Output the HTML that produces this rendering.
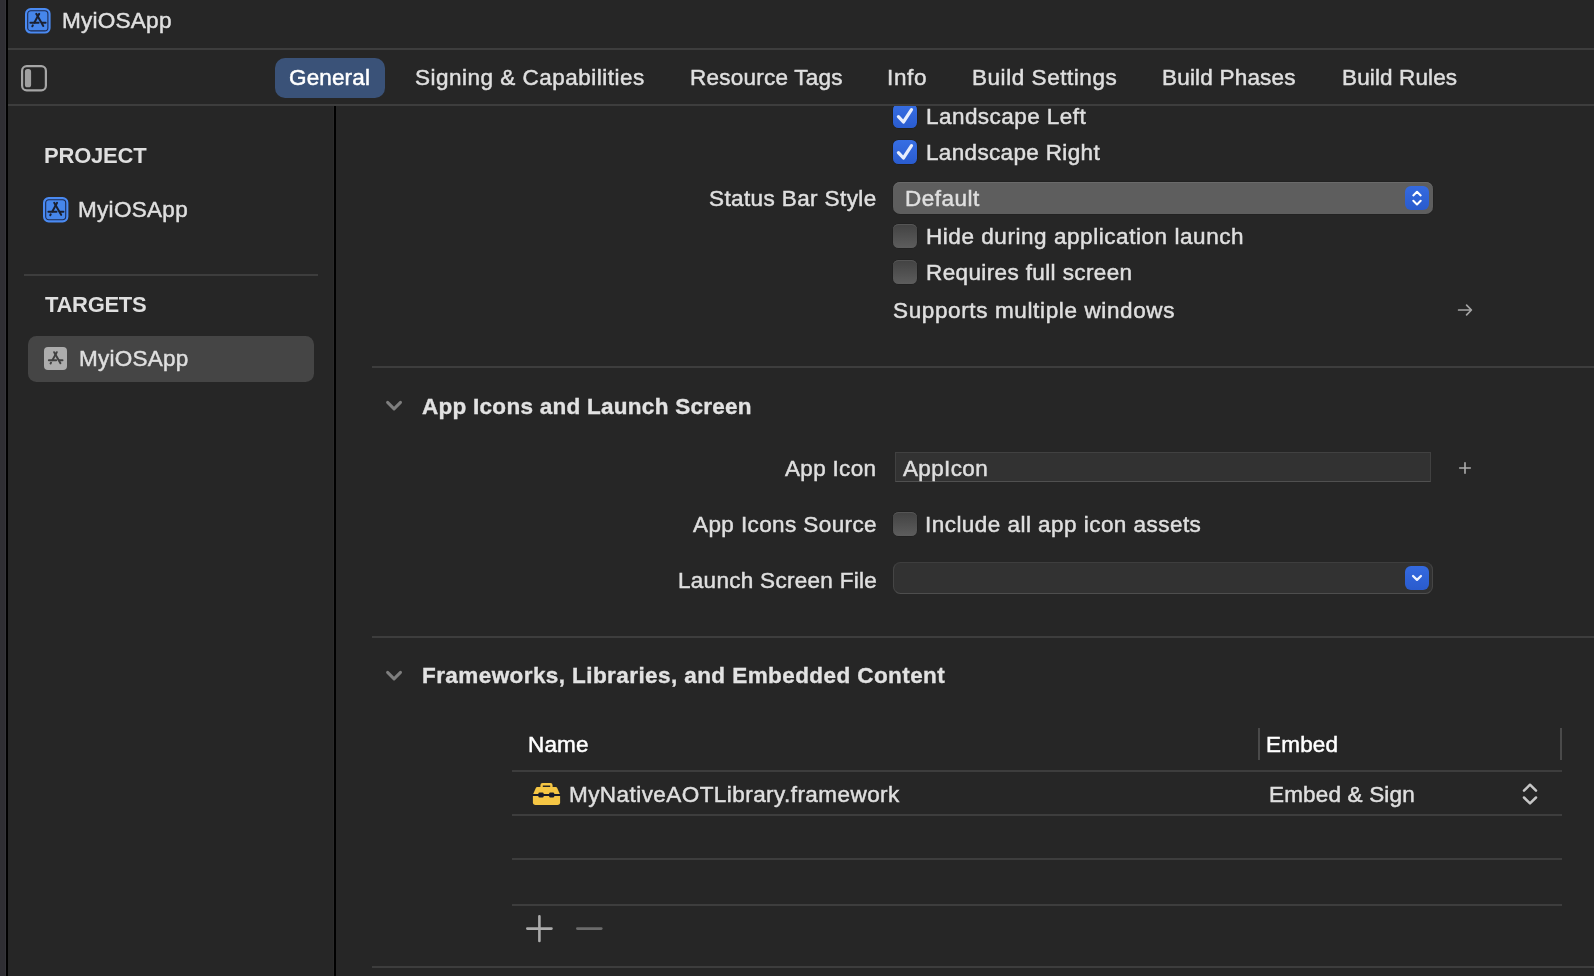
<!DOCTYPE html>
<html>
<head>
<meta charset="utf-8">
<title>MyiOSApp</title>
<style>
html,body{margin:0;padding:0;}
body{width:1594px;height:976px;overflow:hidden;background:#262626;position:relative;
  font-family:"Liberation Sans",sans-serif;font-size:22.5px;color:#dfdfdf;}
.a{position:absolute;}
.t{position:absolute;white-space:nowrap;line-height:26px;height:26px;-webkit-text-stroke:0.5px currentColor;will-change:transform;}
.b{font-weight:bold;-webkit-text-stroke:0;}
.h{-webkit-text-stroke:0.35px currentColor;color:#e2e2e2}
.hl{position:absolute;height:2px;background:#3d3d3d;}
.cb{position:absolute;width:24px;height:24px;border-radius:5.5px;box-sizing:border-box;}
.cb.on{background:linear-gradient(#376ee3,#2a5ccf);box-shadow:0 0 0 0.5px rgba(0,0,0,.3);}
.cb.off{background:linear-gradient(#424242,#5d5d5d);box-shadow:inset 0 1px 0 #555,0 0 0 0.5px rgba(0,0,0,.25);}
svg{position:absolute;overflow:visible;}
</style>
</head>
<body>
<!-- window left edge -->
<div class="a" style="left:0;top:0;width:6px;height:976px;background:linear-gradient(90deg,#2f2e33 0,#2f2e33 4.5px,#353439 5px,#353439 6px)"></div>
<div class="a" style="left:6px;top:0;width:2px;height:976px;background:#000"></div>

<!-- title row -->
<svg style="left:25px;top:7.9px" width="25.6" height="25.6" viewBox="0 0 25.6 25.6">
<rect x="1.1" y="1.1" width="23.4" height="23.4" rx="4.6" fill="#4686eb" stroke="#4a8af2" stroke-width="2.2"/>
<rect x="2.7" y="2.7" width="20.2" height="20.2" rx="3.2" fill="none" stroke="#1d2b52" stroke-width="1.1"/>
<g stroke="#1b2030" stroke-width="2" stroke-linecap="round" fill="none">
<path d="M14.2 5.8 L9.4 14.6"/><path d="M11.3 5.8 L18.3 18"/><path d="M5.4 14.8 H13.6"/><path d="M17 14.8 H20.6"/><path d="M7.8 17.4 L7.3 18.3"/>
</g></svg>
<svg style="left:21px;top:64.8px" width="26" height="26.4" viewBox="0 0 26 26.4">
<rect x="1.1" y="1.1" width="23.8" height="24.2" rx="4.6" fill="none" stroke="#a6a6a6" stroke-width="2.2"/>
<rect x="3.9" y="4.1" width="6.2" height="18.2" rx="2.6" fill="#a0a0a0"/></svg>
<div class="t" id="title" style="left:62.4px;top:8.4px;font-size:22.6px;letter-spacing:0.21px">MyiOSApp</div>
<div class="hl" style="left:8px;top:48px;width:1586px;"></div>

<!-- tab bar -->
<div class="a" style="left:275px;top:58px;width:110px;height:40px;border-radius:10px;background:#3a5278"></div>
<div class="t tab" id="tab1" style="left:289.4px;top:65px;color:#fff;letter-spacing:0.14px">General</div>
<div class="t tab" id="tab2" style="left:415px;top:65px;letter-spacing:0.49px">Signing &amp; Capabilities</div>
<div class="t tab" id="tab3" style="left:689.8px;top:65px;letter-spacing:0.24px">Resource Tags</div>
<div class="t tab" id="tab4" style="left:886.7px;top:65px;letter-spacing:0.67px">Info</div>
<div class="t tab" id="tab5" style="left:971.8px;top:65px;letter-spacing:0.55px">Build Settings</div>
<div class="t tab" id="tab6" style="left:1161.7px;top:65px;letter-spacing:0.2px">Build Phases</div>
<div class="t tab" id="tab7" style="left:1341.9px;top:65px;letter-spacing:0.13px">Build Rules</div>
<div class="hl" style="left:8px;top:104px;width:1586px;"></div>

<!-- sidebar -->
<div class="a" style="left:333px;top:106px;width:1px;height:870px;background:#2a2a2a"></div>
<div class="a" style="left:334px;top:106px;width:2px;height:870px;background:#000"></div>
<div class="t b" id="sproj" style="left:43.8px;top:142.9px;font-size:22px;letter-spacing:-0.2px">PROJECT</div>
<svg style="left:43.1px;top:197.1px" width="25.4" height="25.4" viewBox="0 0 25.6 25.6">
<rect x="1.1" y="1.1" width="23.4" height="23.4" rx="4.6" fill="#4686eb" stroke="#4a8af2" stroke-width="2.2"/>
<rect x="2.7" y="2.7" width="20.2" height="20.2" rx="3.2" fill="none" stroke="#1d2b52" stroke-width="1.1"/>
<g stroke="#1b2030" stroke-width="2" stroke-linecap="round" fill="none">
<path d="M14.2 5.8 L9.4 14.6"/><path d="M11.3 5.8 L18.3 18"/><path d="M5.4 14.8 H13.6"/><path d="M17 14.8 H20.6"/><path d="M7.8 17.4 L7.3 18.3"/>
</g></svg>
<div class="t" id="sp1" style="left:78.2px;top:197.4px;letter-spacing:0.31px">MyiOSApp</div>
<div class="hl" style="left:24px;top:274px;width:294px;"></div>
<div class="t b" id="starg" style="left:44.9px;top:291.5px;font-size:22px;letter-spacing:-0.3px">TARGETS</div>
<div class="a" style="left:28px;top:336px;width:286px;height:46px;border-radius:8.5px;background:#454545"></div>
<svg style="left:44px;top:346.7px" width="23" height="23" viewBox="0 0 25.6 25.6">
<rect x="0" y="0" width="25.6" height="25.6" rx="4.4" fill="#adadad"/>
<g stroke="#404040" stroke-width="2.2" stroke-linecap="round" fill="none">
<path d="M14.2 5.8 L9.4 14.6"/><path d="M11.3 5.8 L18.3 18"/><path d="M5.4 14.8 H13.6"/><path d="M17 14.8 H20.6"/><path d="M7.8 17.4 L7.3 18.3"/>
</g></svg>
<div class="t" id="sp2" style="left:78.5px;top:346px;letter-spacing:0.23px">MyiOSApp</div>

<!-- content: deployment info tail -->
<div class="a" style="left:0;top:0;width:1594px;height:976px;clip-path:inset(106px 0 0 0)">
<div class="cb on" style="left:893px;top:104px;"></div>
<svg style="left:893px;top:104px" width="24" height="24" viewBox="0 0 24 24"><path d="M5.4 12.6 L10.4 18 L18.5 5.7" fill="none" stroke="#e8eefc" stroke-width="3.2" stroke-linecap="round" stroke-linejoin="round"/></svg>
<div class="t" id="l1" style="left:925.7px;top:104px;letter-spacing:0.45px">Landscape Left</div>
<div class="cb on" style="left:893px;top:140px;"></div>
<svg style="left:893px;top:140px" width="24" height="24" viewBox="0 0 24 24"><path d="M5.4 12.6 L10.4 18 L18.5 5.7" fill="none" stroke="#e8eefc" stroke-width="3.2" stroke-linecap="round" stroke-linejoin="round"/></svg>
<div class="t" id="l2" style="left:925.7px;top:140px;letter-spacing:0.34px">Landscape Right</div>
<div class="t" id="l3" style="left:709.4px;top:185.5px;letter-spacing:0.39px">Status Bar Style</div>
<div class="a" style="left:893px;top:182px;width:540px;height:32px;border-radius:7px;background:#5e5e5e;box-shadow:inset 0 1px 0 #6a6a6a,0 0 0 0.5px rgba(0,0,0,.2)"></div>
<div class="a" style="left:1405px;top:186px;width:24px;height:24px;border-radius:6px;background:linear-gradient(#346ae0,#2a5bcd)"></div>
<svg style="left:1405px;top:186px" width="24" height="24" viewBox="0 0 24 24"><path d="M8.3 9.4 L12 5.8 L15.7 9.4 M8.3 14.8 L12 18.4 L15.7 14.8" fill="none" stroke="#fff" stroke-width="2.05" stroke-linecap="round" stroke-linejoin="round"/></svg>
<div class="t" id="l4" style="left:905.4px;top:185.5px;letter-spacing:0.5px">Default</div>
<div class="cb off" style="left:893px;top:224px;"></div>
<div class="t" id="l5" style="left:925.5px;top:224px;letter-spacing:0.555px">Hide during application launch</div>
<div class="cb off" style="left:893px;top:260px;"></div>
<div class="t" id="l6" style="left:925.5px;top:260px;letter-spacing:0.38px">Requires full screen</div>
<div class="t" id="l7" style="left:892.8px;top:298px;letter-spacing:0.63px">Supports multiple windows</div>
<svg style="left:1456px;top:302px" width="18" height="16" viewBox="0 0 18 16"><path d="M2.6 8 H15.2 M10.6 3.1 L15.4 8 L10.6 12.9" fill="none" stroke="#a4a4a4" stroke-width="1.7" stroke-linecap="round" stroke-linejoin="round"/></svg>
<div class="hl" style="left:372px;top:366px;width:1222px;"></div>

<!-- app icons section -->
<svg style="left:385px;top:400px" width="18" height="12" viewBox="0 0 18 12"><path d="M2.6 2.4 L9.05 8.9 L15.5 2.4" fill="none" stroke="#7e7e7e" stroke-width="3" stroke-linecap="round" stroke-linejoin="round"/></svg>
<div class="t b h" id="h1" style="left:422.2px;top:393.6px;letter-spacing:0.27px">App Icons and Launch Screen</div>
<div class="t" id="l8" style="left:784.8px;top:455.7px;letter-spacing:0.31px">App Icon</div>
<div class="a" style="left:895px;top:452px;width:536px;height:30px;background:#323232;box-sizing:border-box;border:1px solid #414141;border-bottom-color:#505050"></div>
<div class="t" id="l9" style="left:902.7px;top:455.7px;letter-spacing:0.35px">AppIcon</div>
<svg style="left:1458px;top:461px" width="14" height="14" viewBox="0 0 14 14"><path d="M1.7 7 H12.3 M7 1.7 V12.3" fill="none" stroke="#adadad" stroke-width="1.6" stroke-linecap="round"/></svg>
<div class="t" id="l10" style="left:692.8px;top:511.7px;letter-spacing:0.4px">App Icons Source</div>
<div class="cb off" style="left:893px;top:512px;"></div>
<div class="t" id="l11" style="left:924.8px;top:511.7px;letter-spacing:0.46px">Include all app icon assets</div>
<div class="t" id="l12" style="left:678.4px;top:567.8px;letter-spacing:0.29px">Launch Screen File</div>
<div class="a" style="left:893px;top:562px;width:540px;height:32px;border-radius:7.5px;background:#323232;box-sizing:border-box;border:1px solid #454545;border-top-color:#3e3e3e;border-bottom-color:#4e4e4e"></div>
<div class="a" style="left:1405px;top:566px;width:24px;height:24px;border-radius:6px;background:linear-gradient(#346ae0,#2a5bcd)"></div>
<svg style="left:1405px;top:566px" width="24" height="24" viewBox="0 0 24 24"><path d="M8.05 10 L12 13.9 L15.95 10" fill="none" stroke="#f0f4fe" stroke-width="2.3" stroke-linecap="round" stroke-linejoin="round"/></svg>
<div class="hl" style="left:372px;top:636px;width:1222px;"></div>

<!-- frameworks section -->
<svg style="left:385px;top:670px" width="18" height="12" viewBox="0 0 18 12"><path d="M2.6 2.4 L9.05 8.9 L15.5 2.4" fill="none" stroke="#7e7e7e" stroke-width="3" stroke-linecap="round" stroke-linejoin="round"/></svg>
<div class="t b h" id="h2" style="left:422.4px;top:662.5px;letter-spacing:0.42px">Frameworks, Libraries, and Embedded Content</div>
<div class="a" style="left:1258px;top:728px;width:2px;height:32px;background:#4a4a4a"></div>
<div class="a" style="left:1560px;top:728px;width:2px;height:32px;background:#4a4a4a"></div>
<div class="t" id="c1" style="left:527.6px;top:732px;color:#fff;letter-spacing:0.13px">Name</div>
<div class="t" id="c2" style="left:1266.2px;top:732px;color:#fff;letter-spacing:0.2px">Embed</div>
<div class="hl" style="left:512px;top:770px;width:1050px;"></div>
<svg style="left:532px;top:782px" width="29" height="24" viewBox="0 0 29 24">
<g fill="#f5c644"><path d="M8.4 5.4 V3.2 Q8.4 1 10.6 1 H18.4 Q20.6 1 20.6 3.2 V5.4 H18.2 V3.5 H10.8 V5.4 Z"/>
<path d="M5.2 5.1 H23.8 Q24.8 5.1 25.2 6 L27.8 12 H1.2 L3.8 6 Q4.2 5.1 5.2 5.1 Z"/>
<path d="M0.9 13.9 H28.1 V20.3 Q28.1 23 25.4 23 H3.6 Q0.9 23 0.9 20.3 Z"/></g>
<g fill="#1a1c2a"><rect x="6.4" y="10.4" width="5.2" height="5" rx="1.2"/><rect x="17.2" y="10.4" width="5" height="5" rx="1.2"/><rect x="0.6" y="12.1" width="27.8" height="1.7"/></g>
</svg>
<div class="t" id="r1" style="left:568.6px;top:782px;letter-spacing:0.44px">MyNativeAOTLibrary.framework</div>
<svg style="left:1521px;top:782px" width="18" height="24" viewBox="0 0 18 24"><path d="M3 8.6 L9 2.7 L15 8.6 M3 15.5 L9 21.4 L15 15.5" fill="none" stroke="#c6c6c6" stroke-width="2.5" stroke-linecap="round" stroke-linejoin="round"/></svg>
<div class="t" id="r2" style="left:1268.7px;top:782px;letter-spacing:0.17px">Embed &amp; Sign</div>
<div class="hl" style="left:512px;top:814px;width:1050px;"></div>
<div class="hl" style="left:512px;top:858px;width:1050px;"></div>
<div class="hl" style="left:512px;top:904px;width:1050px;"></div>
<svg style="left:524px;top:913px" width="82" height="32" viewBox="0 0 82 32"><path d="M3.3 15.6 H27.5 M15.4 3.3 V27.9" fill="none" stroke="#ababab" stroke-width="2.6" stroke-linecap="round"/><path d="M53.3 15.6 H77.3" fill="none" stroke="#6b6b6b" stroke-width="2.6" stroke-linecap="round"/></svg>
<div class="hl" style="left:372px;top:966px;width:1222px;"></div>
</div>
</body>
</html>
